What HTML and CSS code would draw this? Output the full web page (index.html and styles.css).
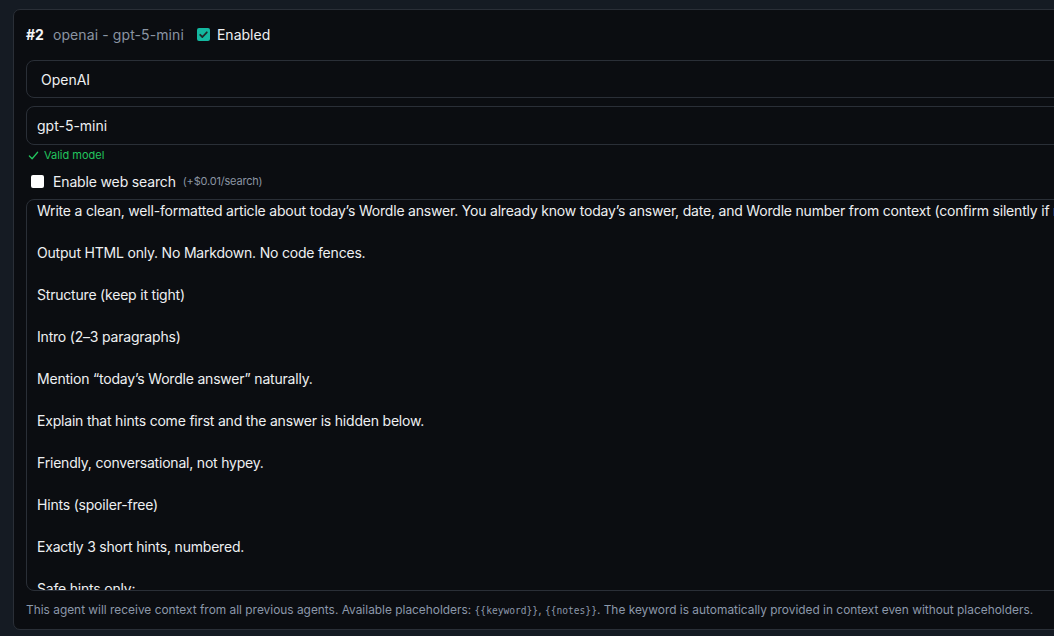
FILE: index.html
```html
<!DOCTYPE html>
<html>
<head>
<meta charset="utf-8">
<link rel="stylesheet" href="styles.css">
</head>
<body>
<div class="page">
  <section class="card">
    <header class="card-head">
      <span class="num">#2</span>
      <span class="meta">openai - gpt-5-mini</span>
      <label class="enabled">
        <span class="check-on"><svg viewBox="0 0 13 13" width="13" height="13"><path d="M3.2 6.8 L5.4 9 L9.8 4.3" fill="none" stroke="#1f2a2a" stroke-width="1.8" stroke-linecap="round" stroke-linejoin="round"/></svg></span>
        <span>Enabled</span>
      </label>
    </header>
    <div class="field select">OpenAI</div>
    <div class="field input">gpt-5-mini</div>
    <div class="valid"><svg viewBox="0 0 12 12" width="11" height="11"><path d="M1.5 6.5 L4.5 9.5 L10.5 2.5" fill="none" stroke="#22c55e" stroke-width="1.4" stroke-linecap="round" stroke-linejoin="round"/></svg><span>Valid model</span></div>
    <label class="websearch">
      <span class="check-off"></span>
      <span class="ws-label">Enable web search</span>
      <span class="ws-cost">(+$0.01/search)</span>
    </label>
    <div class="prompt">Write a clean, well-formatted article about today’s Wordle answer. You already know today’s answer, date, and Wordle number from context (confirm silently if needed).

Output HTML only. No Markdown. No code fences.

Structure (keep it tight)

Intro (2–3 paragraphs)

Mention “today’s Wordle answer” naturally.

Explain that hints come first and the answer is hidden below.

Friendly, conversational, not hypey.

Hints (spoiler-free)

Exactly 3 short hints, numbered.

Safe hints only:

Letter count and vowels.</div>
    <p class="note">This agent will receive context from all previous agents. Available placeholders: <code>{{keyword}}</code>, <code>{{notes}}</code>. The keyword is automatically provided in context even without placeholders.</p>
  </section>
</div>
</body>
</html>
```

FILE: styles.css
```css
html, body {
  margin: 0;
  padding: 0;
  overflow: hidden;
  background: #151b23;
  height: 100%;
}

body {
  font-family: Inter, "Noto Sans", "Liberation Sans", sans-serif;
  color: #e6e8ec;
}

.page {
  padding: 9px 0 0 13px;
}

.card {
  width: 1300px;
  height: 621px;
  box-sizing: border-box;
  background: #0b0d11;
  border: 1px solid #2a2f37;
  border-radius: 7px;
  padding: 13px 12px 0 12px;
  display: flex;
  flex-direction: column;
}

.card-head {
  display: flex;
  align-items: center;
  height: 22px;
  font-size: 14px;
  margin-bottom: 15px;
}

.num {
  font-weight: 700;
  color: #f2f3f5;
}

.meta {
  color: #8a94a2;
  margin-left: 9px;
  letter-spacing: 0.1px;
}

.enabled {
  display: flex;
  align-items: center;
  margin-left: 13px;
  color: #eef0f2;
}

.check-on {
  width: 13px;
  height: 13px;
  border-radius: 2px;
  background: #14b8a0;
  display: inline-flex;
  margin-right: 7px;
}

.field {
  box-sizing: border-box;
  border: 1px solid #2a2f37;
  border-radius: 8px;
  font-size: 14px;
  color: #eef0f2;
  display: flex;
  align-items: center;
}

.select {
  height: 38px;
  padding-left: 14px;
  margin-bottom: 8px;
}

.input {
  height: 39px;
  padding-left: 10px;
}

.valid {
  display: flex;
  align-items: center;
  gap: 5px;
  color: #22c55e;
  font-size: 11px;
  height: 14px;
  margin-top: 3px;
  padding-left: 2px;
}

.websearch {
  display: flex;
  align-items: center;
  height: 20px;
  margin-top: 9px;
  margin-bottom: 8px;
  padding-left: 5px;
}

.check-off {
  width: 13px;
  height: 13px;
  background: #ffffff;
  border-radius: 2px;
  margin-right: 9px;
}

.ws-label {
  font-size: 14px;
  color: #eef0f2;
  letter-spacing: -0.15px;
}

.ws-cost {
  font-size: 11px;
  color: #8a94a2;
  margin-left: 7px;
  letter-spacing: -0.2px;
}

.prompt {
  box-sizing: border-box;
  height: 392px;
  border: 1px solid #2a2f37;
  border-radius: 8px;
  padding: 0 10px;
  font-size: 14px;
  line-height: 21px;
  letter-spacing: -0.2px;
  color: #eef0f2;
  white-space: pre-wrap;
  overflow: hidden;
}

.note {
  margin: 11px 0 0 0;
  font-size: 11.9px;
  color: #8b98aa;
  white-space: nowrap;
}

.note code {
  font-family: "DejaVu Sans Mono", "Liberation Mono", monospace;
  font-size: 9.6px;
}
```
